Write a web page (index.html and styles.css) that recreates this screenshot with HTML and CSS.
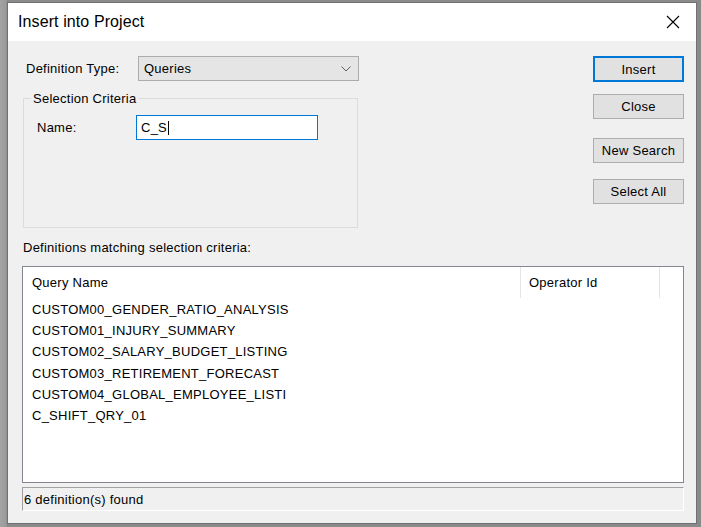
FILE: index.html
```html
<!DOCTYPE html>
<html>
<head>
<meta charset="utf-8">
<link rel="stylesheet" href="styles.css">
</head>
<body>
<div class="window">
  <div class="titlebar">
    <span class="title">Insert into Project</span>
    <svg class="close" width="14" height="14" viewBox="0 0 14 14"><path d="M1 1 L13 13 M13 1 L1 13" stroke="#000" stroke-width="1.1" fill="none"/></svg>
  </div>
  <div class="content">
    <div class="top">
      <div class="left">
        <div class="typerow">
          <span class="lbl-type">Definition Type:</span>
          <div class="combo">
            <span>Queries</span>
            <svg width="10" height="6" viewBox="0 0 10 6"><path d="M0.5 0.5 L5 5 L9.5 0.5" stroke="#606060" stroke-width="1" fill="none"/></svg>
          </div>
        </div>
        <fieldset class="group">
          <legend>Selection Criteria</legend>
          <div class="namerow">
            <span class="lbl-name">Name:</span>
            <div class="input">C_S<span class="caret"></span></div>
          </div>
        </fieldset>
      </div>
      <div class="buttons">
        <div class="btn default b1">Insert</div>
        <div class="btn b2">Close</div>
        <div class="btn b3">New Search</div>
        <div class="btn b4">Select All</div>
      </div>
    </div>
    <div class="matchlbl">Definitions matching selection criteria:</div>
    <div class="list">
      <div class="header">
        <div class="col c1">Query Name</div>
        <div class="col c2">Operator Id</div>
      </div>
      <div class="rows">
        <div class="row">CUSTOM00_GENDER_RATIO_ANALYSIS</div>
        <div class="row">CUSTOM01_INJURY_SUMMARY</div>
        <div class="row">CUSTOM02_SALARY_BUDGET_LISTING</div>
        <div class="row">CUSTOM03_RETIREMENT_FORECAST</div>
        <div class="row">CUSTOM04_GLOBAL_EMPLOYEE_LISTI</div>
        <div class="row">C_SHIFT_QRY_01</div>
      </div>
    </div>
    <div class="status">6 definition(s) found</div>
  </div>
</div>
</body>
</html>
```
FILE: styles.css
```css
html, body {
  margin: 0;
  padding: 0;
  width: 701px;
  height: 527px;
  overflow: hidden;
}
body {
  background: linear-gradient(to right, #a3a3a3 0, #9a9a9a 6px, #8a8a8a 7px);
  padding: 2px 4px 3px 7px;
  box-sizing: border-box;
  font-family: "Liberation Sans", Arial, sans-serif;
  font-size: 13px;
  letter-spacing: 0.25px;
  color: #000;
}
.window {
  width: 690px;
  height: 522px;
  box-sizing: border-box;
  border: 1px solid #707070;
  background: #f0f0f0;
  display: flex;
  flex-direction: column;
}
.titlebar {
  height: 38px;
  background: #fff;
  display: flex;
  align-items: center;
  justify-content: space-between;
  padding: 0 16px 0 10px;
  flex: none;
}
.title {
  font-size: 16px;
  letter-spacing: 0.1px;
  margin-top: 0;
}
.close {
  margin-top: -1px;
}
.content {
  padding: 15px 12px 0 14px;
  display: flex;
  flex-direction: column;
}
.top {
  display: flex;
  justify-content: space-between;
}
.left {
  width: 337px;
}
.typerow {
  display: flex;
  align-items: center;
  height: 25px;
}
.lbl-type {
  padding-left: 4px;
  width: 112px;
}
.combo {
  width: 221px;
  height: 25px;
  box-sizing: border-box;
  border: 1px solid #acacac;
  background: #e5e5e5;
  display: flex;
  align-items: center;
  justify-content: space-between;
  padding: 0 7px 0 5px;
}
.group {
  margin: 10px 0 0 1px;
  width: 335px;
  height: 137px;
  box-sizing: border-box;
  border: 1px solid #dcdcdc;
  padding: 9px 0 0 13px;
}
.group legend {
  padding: 0 2px;
  margin-left: -6px;
  line-height: 15px;
}
.namerow {
  display: flex;
  align-items: center;
}
.lbl-name {
  width: 99px;
}
.input {
  width: 182px;
  height: 25px;
  box-sizing: border-box;
  border: 1px solid #0078d7;
  background: #fff;
  display: flex;
  align-items: center;
  padding-left: 4px;
}
.caret {
  display: inline-block;
  width: 1px;
  height: 14px;
  background: #000;
  margin-left: 1px;
}
.buttons {
  width: 91px;
  display: flex;
  flex-direction: column;
}
.btn {
  height: 25px;
  box-sizing: border-box;
  border: 1px solid #adadad;
  background: #e1e1e1;
  display: flex;
  align-items: center;
  justify-content: center;
}
.btn.default {
  border: 2px solid #0078d7;
  height: 26px;
}
.b2 { margin-top: 12px; }
.b3 { margin-top: 19px; }
.b4 { margin-top: 16px; }
.matchlbl {
  margin-top: 12px;
  padding-left: 1px;
  line-height: 15px;
}
.list {
  margin-top: 11px;
  width: 662px;
  height: 217px;
  box-sizing: border-box;
  border: 1px solid #828790;
  background: #fff;
}
.header {
  display: flex;
  height: 31px;
}
.col {
  display: flex;
  align-items: center;
  padding-left: 9px;
  box-sizing: border-box;
  border-right: 1px solid #e5e5e5;
}
.c1 { width: 498px; }
.c2 { width: 139px; padding-left: 8px; }
.rows {
  padding: 1px 0 0 9px;
}
.row {
  height: 21.2px;
  line-height: 21px;
}
.status {
  margin-top: 4px;
  width: 662px;
  height: 24px;
  box-sizing: border-box;
  border: 1px solid #d7d7d7;
  border-top-color: #a0a0a0;
  border-left-color: #a0a0a0;
  border-bottom-color: #fff;
  border-right-color: #fff;
  padding-left: 1px;
  display: flex;
  align-items: center;
}
```
